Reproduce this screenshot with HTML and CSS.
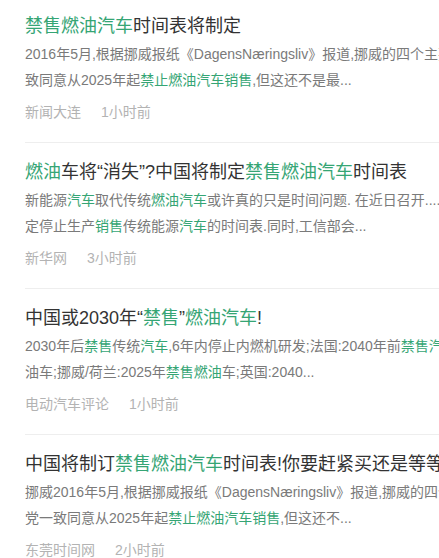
FILE: index.html
```html
<!DOCTYPE html>
<html lang="zh-CN">
<head>
  <meta charset="UTF-8">
  <title>禁售燃油汽车 - 新闻</title>
  <link rel="stylesheet" href="styles.css">
</head>
<body>

<ul class="news-list">

  <li class="news-item">
    <h3 class="news-title"><em>禁售燃油汽车</em>时间表将制定</h3>
    <p class="news-desc">
      <span class="line">2016年5月,根据挪威报纸《DagensNæringsliv》报道,挪威的四个主要政党</span>
      <span class="line">致同意从2025年起<em>禁止燃油汽车销售</em>,但这还不是最...</span>
    </p>
    <div class="news-meta"><span>新闻大连</span><span>1小时前</span></div>
  </li>

  <li class="news-item">
    <h3 class="news-title"><em>燃油</em>车将“消失”?中国将制定<em>禁售燃油汽车</em>时间表</h3>
    <p class="news-desc">
      <span class="line">新能源<em>汽车</em>取代传统<em>燃油汽车</em>或许真的只是时间问题. 在近日召开....</span>
      <span class="line">定停止生产<em>销售</em>传统能源<em>汽车</em>的时间表.同时,工信部会...</span>
    </p>
    <div class="news-meta"><span>新华网</span><span>3小时前</span></div>
  </li>

  <li class="news-item">
    <h3 class="news-title">中国或2030年“<em>禁售</em>”<em>燃油汽车</em>!</h3>
    <p class="news-desc">
      <span class="line">2030年后<em>禁售</em>传统<em>汽车</em>,6年内停止内燃机研发;法国:2040年前<em>禁售汽车</em></span>
      <span class="line">油车;挪威/荷兰:2025年<em>禁售燃油</em>车;英国:2040...</span>
    </p>
    <div class="news-meta"><span>电动汽车评论</span><span>1小时前</span></div>
  </li>

  <li class="news-item">
    <h3 class="news-title">中国将制订<em>禁售燃油汽车</em>时间表!你要赶紧买还是等等看</h3>
    <p class="news-desc">
      <span class="line">挪威2016年5月,根据挪威报纸《DagensNæringsliv》报道,挪威的四个主要</span>
      <span class="line">党一致同意从2025年起<em>禁止燃油汽车销售</em>,但这还不...</span>
    </p>
    <div class="news-meta"><span>东莞时间网</span><span>2小时前</span></div>
  </li>

</ul>

</body>
</html>
```

FILE: styles.css
```css
* { box-sizing: border-box; margin: 0; padding: 0; }
html, body { overflow: hidden; }
body {
  font-family: "Liberation Sans", "Noto Sans CJK SC", sans-serif;
  background: #fff; color: #333;
}

.news-list { list-style: none; padding-left: 25px; width: 480px; }

.news-item { padding: 16px 0 20px; border-bottom: 1px solid #eee; }
.news-item:first-child { padding-top: 13px; }

em { font-style: normal; color: #35a574; }

.news-title {
  font-size: 18px; font-weight: normal; line-height: 26px;
  color: #333; white-space: nowrap;
}

.news-desc { margin-top: 2px; font-size: 14px; line-height: 26px; color: #7a7a7a; }
.news-desc .line { display: block; white-space: nowrap; }

.news-meta { margin-top: 9px; font-size: 14px; line-height: 20px; color: #b3b3b3; }
.news-meta span + span { margin-left: 20px; }
```
